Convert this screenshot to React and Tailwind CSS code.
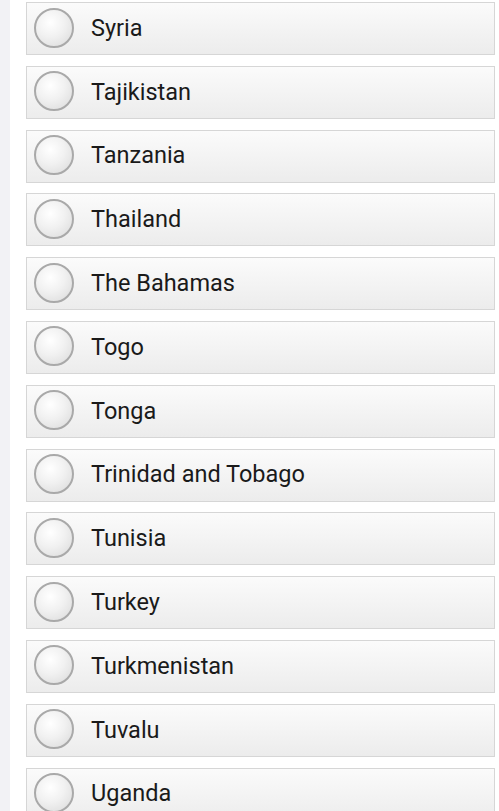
const countries = [
  "Syria",
  "Tajikistan",
  "Tanzania",
  "Thailand",
  "The Bahamas",
  "Togo",
  "Tonga",
  "Trinidad and Tobago",
  "Tunisia",
  "Turkey",
  "Turkmenistan",
  "Tuvalu",
  "Uganda",
];

function Radio() {
  return (
    <span className="block w-[40px] h-[40px] shrink-0 rounded-full border-2 border-[#a9a9a9] bg-[radial-gradient(circle_at_40%_35%,#ffffff_0%,#f1f1f1_45%,#d9d9d9_100%)]" />
  );
}

export default function App() {
  return (
    <div className="w-[499px] h-[811px] overflow-hidden bg-white flex font-['Roboto',sans-serif]">
      <div className="w-[10px] shrink-0 bg-[#f2f2f5]" />
      <div className="flex-1 pl-[16px] pr-[4px] pt-[2px] flex flex-col gap-[10.8px]">
        {countries.map((name) => (
          <label
            key={name}
            className="h-[53px] shrink-0 flex items-center border border-[#d6d6d6] bg-gradient-to-b from-[#fbfbfb] to-[#ececec]"
          >
            <span className="ml-[7px] -mt-[2px]">
              <Radio />
            </span>
            <span className="ml-[17px] text-[23.5px] text-[#1a1a1a]">{name}</span>
          </label>
        ))}
      </div>
    </div>
  );
}
